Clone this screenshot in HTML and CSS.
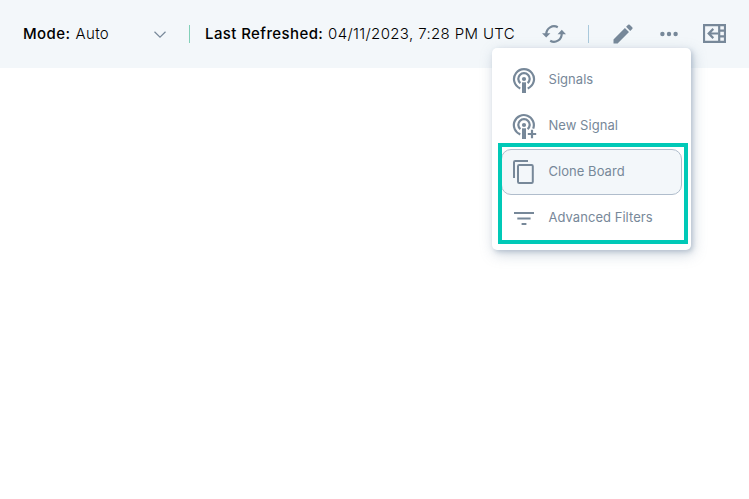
FILE: index.html
```html
<!DOCTYPE html>
<html lang="en">
<head>
<meta charset="utf-8">
<title>Board</title>
<link rel="stylesheet" href="styles.css">
</head>
<body>
<header class="toolbar">
  <div class="mode"><span class="label">Mode:</span><span class="mode-value">Auto</span>
    <svg class="chevron" width="12" height="7" viewBox="0 0 12 7"><path d="M.5.7 6 6.1 11.5.7"/></svg>
  </div>
  <i class="divider divider-teal"></i>
  <div class="refreshed"><span class="label label-refreshed">Last Refreshed:</span><span class="date">04/11/2023, 7:28 PM UTC</span></div>
  <svg class="icon refresh" width="24" height="20" viewBox="0 0 24 20">
    <path class="line" d="M4.3 11.5V10a7.7 7.7 0 0 1 11.5-6.7M19.7 8.5V10A7.7 7.7 0 0 1 8.2 16.7"/>
    <path d="M0 9.2h8.4L4.2 13.6zM24 10.2h-8.4l4.2-4.5z"/>
  </svg>
  <i class="divider divider-blue"></i>
  <svg class="icon pencil" width="20" height="20" viewBox="0 0 20 20"><path d="M.5 15.4V19.5h4.1L16 8.1 11.9 4zM19.2 4.9a1.1 1.1 0 0 0 0-1.6L16.7.8a1.1 1.1 0 0 0-1.6 0L13.1 2.8l4.1 4.1z"/></svg>
  <svg class="icon more" width="18" height="6" viewBox="0 0 18 6"><circle cx="2.4" cy="3" r="2.2"/><circle cx="9" cy="3" r="2.2"/><circle cx="15.6" cy="3" r="2.2"/></svg>
  <svg class="icon panel" width="23" height="19" viewBox="0 0 23 19">
    <path class="line" d="M1 1.2h21v16.6H1zM16.2 1v17M16.2 6.7H22M16.2 12.3H22M5.8 9.5H15M10.3 4.9 5.7 9.5l4.6 4.6"/>
  </svg>
</header>
<nav class="menu">
  <a class="item">
    <svg class="icon" width="26" height="26" viewBox="0 0 26 26"><path class="line" d="M8.3 21.4a10 10 0 1 1 7.4 0M8.4 16.2a5.7 5.7 0 1 1 7.2 0"/><circle cx="12" cy="12" r="2.1"/><path d="M10 15.3h4V26h-4z"/></svg>
    <span class="name">Signals</span>
  </a>
  <a class="item">
    <svg class="icon" width="26" height="26" viewBox="0 0 26 26"><path class="line" d="M8.3 21.4A10 10 0 1 1 21.2 15.6M8.4 16.2a5.7 5.7 0 1 1 7.2 0M20 16.8v8.4M15.8 21h8.4"/><circle cx="12" cy="12" r="2.1"/><path d="M10 15.3h4V26h-4z"/></svg>
    <span class="name">New Signal</span>
  </a>
  <a class="item selected">
    <svg class="icon" width="26" height="26" viewBox="0 0 26 26"><path class="line thin" d="M2 19V3.2Q2 2 3.2 2H16M7.2 6.1H19.6Q20.8 6.1 20.8 7.3V22.7Q20.8 23.9 19.6 23.9H7.2Q6 23.9 6 22.7V7.3Q6 6.1 7.2 6.1z"/></svg>
    <span class="name">Clone Board</span>
  </a>
  <a class="item">
    <svg class="icon" width="26" height="26" viewBox="0 0 26 26"><path class="line thin" d="M2 8h20M5.3 13.5h13.3M9.6 19h4.8"/></svg>
    <span class="name">Advanced Filters</span>
  </a>
  <div class="highlight"></div>
</nav>
</body>
</html>
```

FILE: styles.css
```css
* { box-sizing: border-box; }
body { margin: 0; background: #fff; font-family: Inter, "Liberation Sans", sans-serif; overflow: hidden; }
.toolbar { height: 68px; padding: 0 0 1px 23px; display: flex; align-items: center; background: #f3f7fa; font-size: 15px; font-weight: 300; letter-spacing: .36px; color: #000; white-space: nowrap; }
.mode { display: flex; align-items: center; width: 166px; }
.label { font-weight: 500; letter-spacing: .4px; width: 52.5px; flex: none; }
.label-refreshed { width: 123px; }
.mode-value { width: 78.5px; }
.chevron { fill: none; stroke: #778899; stroke-width: 1.2; position: relative; top: 1px; }
.divider { width: 1px; height: 18px; flex: none; }
.divider-teal { background: #82d0b8; }
.divider-blue { background: #a9c9dc; margin-left: 22px; }
.refreshed { display: flex; width: 325px; margin-left: 15px; }
.icon { fill: #778899; flex: none; }
.line { fill: none; stroke: #778899; stroke-width: 2.2; }
.thin { stroke-width: 2; }
.refresh { margin-left: 12px; }
.pencil { margin-left: 24px; }
.more { margin-left: 26.5px; }
.panel { margin-left: 25.5px; }
.menu { position: absolute; left: 492px; top: 48px; width: 199px; height: 202px; padding: 9px 9px 0; background: #fff; border-radius: 5px; box-shadow: 2px 2px 4px rgba(119, 141, 165, .35), 2px 4px 14px rgba(119, 141, 165, .38); }
.item { height: 46px; display: flex; align-items: center; gap: 10.5px; padding: 0 0 1px 10px; border: 1px solid transparent; border-radius: 10px; color: #778899; font-size: 13px; letter-spacing: .04px; }
.name { padding-bottom: 2px; }
.selected { background: #f3f7fa; border-color: #b0bdcc; }
.highlight { position: absolute; left: 6px; top: 95px; width: 190px; height: 101px; border: 4px solid #00c9b7; }
```
